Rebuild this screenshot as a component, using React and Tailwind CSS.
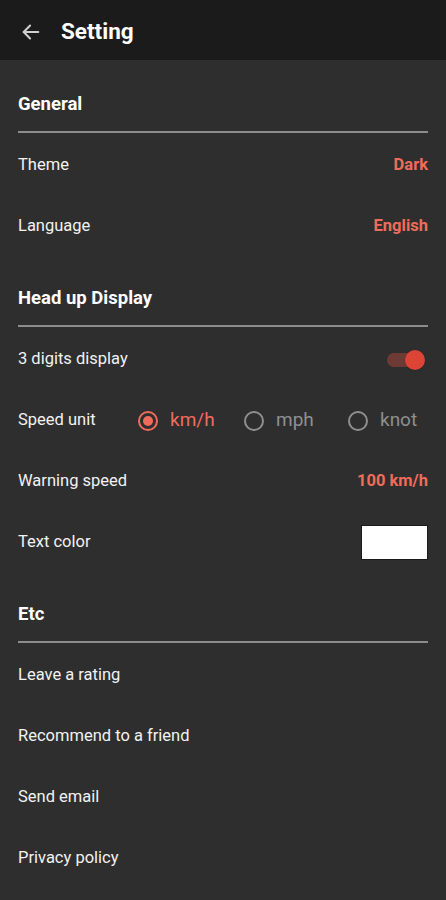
import { useState } from "react";

const ACCENT = "text-[#ef6c5c]";

function SectionTitle({ title, first }) {
  return (
    <div className={first ? "pt-[32px]" : "pt-[29px]"}>
      <h2 className="text-[18.5px] leading-6 font-bold text-white">{title}</h2>
      <div className="mt-[15px] mb-[2px] h-[2px] bg-[#8c8c8c]" />
    </div>
  );
}

function Row({ label, children }) {
  return (
    <div className="h-[61px] flex items-center justify-between">
      <span className="text-[16.5px] text-[#f2f2f2]">{label}</span>
      {children}
    </div>
  );
}

function Radio({ label, checked, onClick }) {
  return (
    <button onClick={onClick} className="flex items-center gap-[12px]">
      <span
        className={
          "w-[20px] h-[20px] rounded-full border-2 flex items-center justify-center " +
          (checked ? "border-[#ef6c5c]" : "border-[#8f8f8f]")
        }
      >
        {checked && <span className="w-[10px] h-[10px] rounded-full bg-[#ef6c5c]" />}
      </span>
      <span className={"text-[19px] " + (checked ? ACCENT : "text-[#8f8f8f]")}>{label}</span>
    </button>
  );
}

export default function App() {
  const [unit, setUnit] = useState("km/h");
  const [threeDigits, setThreeDigits] = useState(true);

  return (
    <div className="min-h-[900px] bg-[#2e2e2e] font-['Roboto',sans-serif]">
      <header className="h-[60px] bg-[#1b1b1b] flex items-center px-[20px] pt-[3px]">
        <svg width="22" height="22" viewBox="0 0 24 24" fill="none" stroke="#cfcfcf" strokeWidth="2.2" strokeLinecap="round" strokeLinejoin="round">
          <path d="M20 12H4" />
          <path d="M11 5l-7 7 7 7" />
        </svg>
        <h1 className="ml-[19px] text-[22.5px] font-bold text-white">Setting</h1>
      </header>

      <div className="px-[18px] pb-4">
        <SectionTitle title="General" first />
        <Row label="Theme">
          <span className={"text-[16.5px] font-bold " + ACCENT}>Dark</span>
        </Row>
        <Row label="Language">
          <span className={"text-[16.5px] font-bold " + ACCENT}>English</span>
        </Row>

        <SectionTitle title="Head up Display" />
        <Row label="3 digits display">
          <button
            onClick={() => setThreeDigits(!threeDigits)}
            className="relative w-[34px] h-[20px] mr-[7px] flex items-center"
          >
            <span className="w-[30px] h-[14px] rounded-full bg-[#6e3a35]" />
            <span
              className={
                "absolute top-0 w-[20px] h-[20px] rounded-full shadow bg-[#dc4436] " +
                (threeDigits ? "right-[-4px]" : "left-[-4px] bg-[#bdbdbd]")
              }
            />
          </button>
        </Row>
        <div className="h-[61px] flex items-center">
          <span className="text-[16.5px] text-[#f2f2f2] w-[120px]">Speed unit</span>
          <div className="flex-1 flex items-center">
            <div className="w-[106px]">
              <Radio label="km/h" checked={unit === "km/h"} onClick={() => setUnit("km/h")} />
            </div>
            <div className="w-[104px]">
              <Radio label="mph" checked={unit === "mph"} onClick={() => setUnit("mph")} />
            </div>
            <Radio label="knot" checked={unit === "knot"} onClick={() => setUnit("knot")} />
          </div>
        </div>
        <Row label="Warning speed">
          <span className={"text-[16.5px] font-bold " + ACCENT}>100 km/h</span>
        </Row>
        <Row label="Text color">
          <span className="w-[67px] h-[35px] bg-white border border-[#1a1a1a]" />
        </Row>

        <SectionTitle title="Etc" />
        <Row label="Leave a rating" />
        <Row label="Recommend to a friend" />
        <Row label="Send email" />
        <Row label="Privacy policy" />
      </div>
    </div>
  );
}
